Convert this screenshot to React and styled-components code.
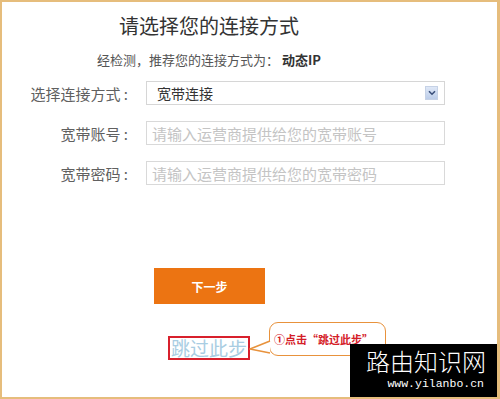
import styled, { createGlobalStyle } from "styled-components";

const GlobalStyle = createGlobalStyle`
  html, body {
    margin: 0;
    padding: 0;
    background: #ffffff;
  }
  * { box-sizing: border-box; }
`;

function App() {
  return (
    <>
      <GlobalStyle />
      <Frame>
        <Head>
          <Title>请选择您的连接方式</Title>
          <Hint>
            经检测，推荐您的连接方式为： <b>动态IP</b>
          </Hint>
        </Head>

        <Form>
          <Label>选择连接方式 :</Label>
          <Select>
            <span>宽带连接</span>
            <ArrowBox>
              <svg width="8" height="6" viewBox="0 0 8 6">
                <path d="M1 1.2 L4 4.2 L7 1.2" fill="none" stroke="#3a4f7a" strokeWidth="1.6" />
              </svg>
            </ArrowBox>
          </Select>

          <Label>宽带账号 :</Label>
          <Field placeholder="请输入运营商提供给您的宽带账号" />

          <Label>宽带密码 :</Label>
          <Field placeholder="请输入运营商提供给您的宽带密码" />
        </Form>

        <NextBtn>下一步</NextBtn>

        <SkipRow>
          <SkipLink>跳过此步</SkipLink>
          <Callout>
            <Tail width="22" height="20" viewBox="0 0 22 20">
              <path d="M21 4 L1 12 L21 16" fill="#fff" stroke="#e8923c" strokeWidth="1.6" strokeLinejoin="round" />
            </Tail>
            ①点击“跳过此步”
          </Callout>
        </SkipRow>

        <Watermark>
          <WmTitle>路由知识网</WmTitle>
          <WmUrl>www.yilanbo.cn</WmUrl>
        </Watermark>
      </Frame>
    </>
  );
}
export default App;

// STYLED COMPONENTS

const Frame = styled.div`
  position: relative;
  width: 500px;
  height: 399px;
  overflow: hidden;
  background: #ffffff;
  border: 2px solid #e6bd7c;
  border-right-width: 3px;
  padding-top: 10px;
  font-family: "Noto Sans CJK SC", "Noto Sans", sans-serif;
`;

const Head = styled.div`
  width: 414px;
  text-align: center;
`;

const Title = styled.h1`
  margin: 0;
  font-size: 20px;
  line-height: 28px;
  font-weight: 400;
  color: #333333;
`;

const Hint = styled.p`
  margin: 11px 0 0;
  font-size: 13px;
  line-height: 18px;
  color: #555555;

  b {
    color: #333333;
    font-weight: 700;
  }
`;

const Form = styled.div`
  display: grid;
  grid-template-columns: 126px 299px;
  grid-auto-rows: 24px;
  column-gap: 18px;
  row-gap: 16px;
  margin-top: 12px;
  align-items: center;
`;

const Label = styled.label`
  text-align: right;
  font-size: 15px;
  color: #606060;
  white-space: nowrap;
`;

const Select = styled.div`
  height: 24px;
  border: 1px solid #d6d6d6;
  display: flex;
  align-items: center;
  justify-content: space-between;
  padding: 0 6px 0 10px;
  font-size: 14px;
  color: #333333;
`;

const ArrowBox = styled.div`
  width: 13px;
  height: 14px;
  display: flex;
  align-items: center;
  justify-content: center;
  background: linear-gradient(#dfe8f7, #bccde9);
  border: 1px solid #c6d2e6;
`;

const Field = styled.input`
  height: 24px;
  border: 1px solid #d9d9d9;
  padding: 0 5px;
  font-family: inherit;
  font-size: 15px;
  color: #333;
  outline: none;

  &::placeholder {
    color: #c4c4c4;
  }
`;

const NextBtn = styled.button`
  display: block;
  margin: 83px 0 0 152px;
  width: 111px;
  height: 36px;
  border: none;
  background: #ec7412;
  color: #ffffff;
  font-family: inherit;
  font-size: 12px;
  font-weight: 700;
  cursor: pointer;
`;

const SkipRow = styled.div`
  display: flex;
  align-items: flex-start;
  margin: 32px 0 0 166px;
`;

const SkipLink = styled.a`
  display: block;
  border: 2px solid #d8202c;
  padding: 0 1px;
  font-size: 19px;
  line-height: 20px;
  color: #a9cde2;
  cursor: pointer;
`;

const Callout = styled.div`
  position: relative;
  margin: -14px 0 0 19px;
  width: 117px;
  height: 34px;
  border: 1.5px solid #e8923c;
  border-radius: 9px;
  background: #fff;
  display: flex;
  align-items: center;
  padding-left: 4px;
  font-size: 11px;
  font-weight: 700;
  color: #d42028;
  white-space: nowrap;
`;

const Tail = styled.svg`
  position: absolute;
  left: -21px;
  top: 14px;
`;

const Watermark = styled.div`
  position: absolute;
  right: -3px;
  bottom: -2px;
  width: 150px;
  height: 55px;
  background: #000000;
  display: flex;
  flex-direction: column;
  align-items: flex-end;
  padding: 5px 14px 0 0;
`;

const WmTitle = styled.div`
  font-family: "Noto Sans CJK SC", sans-serif;
  font-weight: 300;
  font-size: 24px;
  line-height: 24px;
  color: #ffffff;
`;

const WmUrl = styled.div`
  margin-top: 4px;
  font-family: "Liberation Mono", monospace;
  font-size: 11.5px;
  line-height: 13px;
  color: #ffffff;
  padding-right: 2px;
`;
